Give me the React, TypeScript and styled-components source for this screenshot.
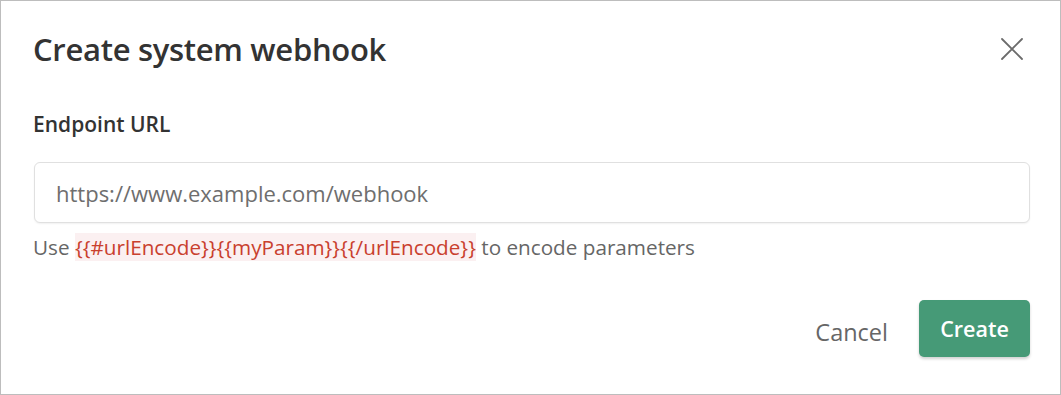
import React from 'react';
import styled, { createGlobalStyle } from 'styled-components';

const GlobalStyle = createGlobalStyle`
  html, body {
    margin: 0;
    padding: 0;
    background: #ffffff;
  }
  * {
    box-sizing: border-box;
  }
`;

const Dialog = styled.div`
  width: 1061px;
  height: 395px;
  border: 1px solid #bdbdbd;
  background: #ffffff;
  padding: 26px 30px 0 33px;
  font-family: "Open Sans", "Noto Sans", sans-serif;
  color: #333333;
  display: flex;
  flex-direction: column;
`;

const Header = styled.div`
  display: flex;
  align-items: center;
  justify-content: space-between;
`;

const Title = styled.h2`
  margin: 0 0 0 -1px;
  font-size: 31px;
  line-height: 44px;
  font-weight: 600;
  color: #333333;
  letter-spacing: -0.3px;
`;

const CloseButton = styled.button`
  width: 28px;
  height: 28px;
  margin-right: 4px;
  padding: 0;
  border: none;
  background: none;
  display: flex;
  align-items: center;
  justify-content: center;
  cursor: pointer;
  color: #6b6b6b;
`;

const Label = styled.label`
  margin: 39px 0 0 -1px;
  font-size: 21px;
  line-height: 28px;
  font-weight: 600;
  color: #333333;
`;

const Input = styled.input`
  margin-top: 24px;
  width: 100%;
  height: 61px;
  border: 1px solid #e0e0e0;
  border-radius: 6px;
  box-shadow: 0 1px 2px rgba(0, 0, 0, 0.06);
  padding: 0 21px;
  font-family: inherit;
  font-size: 22px;
  color: #333333;
  outline: none;

  &::placeholder {
    color: #6e6e6e;
  }
`;

const Hint = styled.p`
  margin: 10px 0 0 -1px;
  font-size: 20.7px;
  line-height: 28px;
  color: #666666;
`;

const Code = styled.span`
  background: #fbf0f1;
  color: #c9402e;
`;

const Footer = styled.div`
  margin-top: 39px;
  display: flex;
  justify-content: flex-end;
  align-items: center;
  gap: 31px;
`;

const TextButton = styled.button`
  border: none;
  background: none;
  padding: 0;
  margin-top: 6px;
  font-family: inherit;
  font-size: 23.5px;
  color: #666666;
  cursor: pointer;
`;

const PrimaryButton = styled.button`
  width: 111px;
  height: 57px;
  border: none;
  border-radius: 5px;
  background: #469a77;
  box-shadow: 0 2px 3px rgba(0, 0, 0, 0.18);
  font-family: inherit;
  font-size: 21.5px;
  font-weight: 600;
  color: #ffffff;
  cursor: pointer;
`;

const App: React.FC = () => {
  return (
    <>
      <GlobalStyle />
      <Dialog>
        <Header>
          <Title>Create system webhook</Title>
          <CloseButton type="button" aria-label="Close">
            <svg width="22" height="22" viewBox="0 0 22 22" fill="none">
              <path d="M1 1L21 21M21 1L1 21" stroke="currentColor" strokeWidth="1.8" strokeLinecap="round" />
            </svg>
          </CloseButton>
        </Header>
        <Label htmlFor="endpoint">Endpoint URL</Label>
        <Input id="endpoint" placeholder="https://www.example.com/webhook" />
        <Hint>
          Use <Code>{'{{#urlEncode}}{{myParam}}{{/urlEncode}}'}</Code> to encode parameters
        </Hint>
        <Footer>
          <TextButton type="button">Cancel</TextButton>
          <PrimaryButton type="button">Create</PrimaryButton>
        </Footer>
      </Dialog>
    </>
  );
};

export default App;
